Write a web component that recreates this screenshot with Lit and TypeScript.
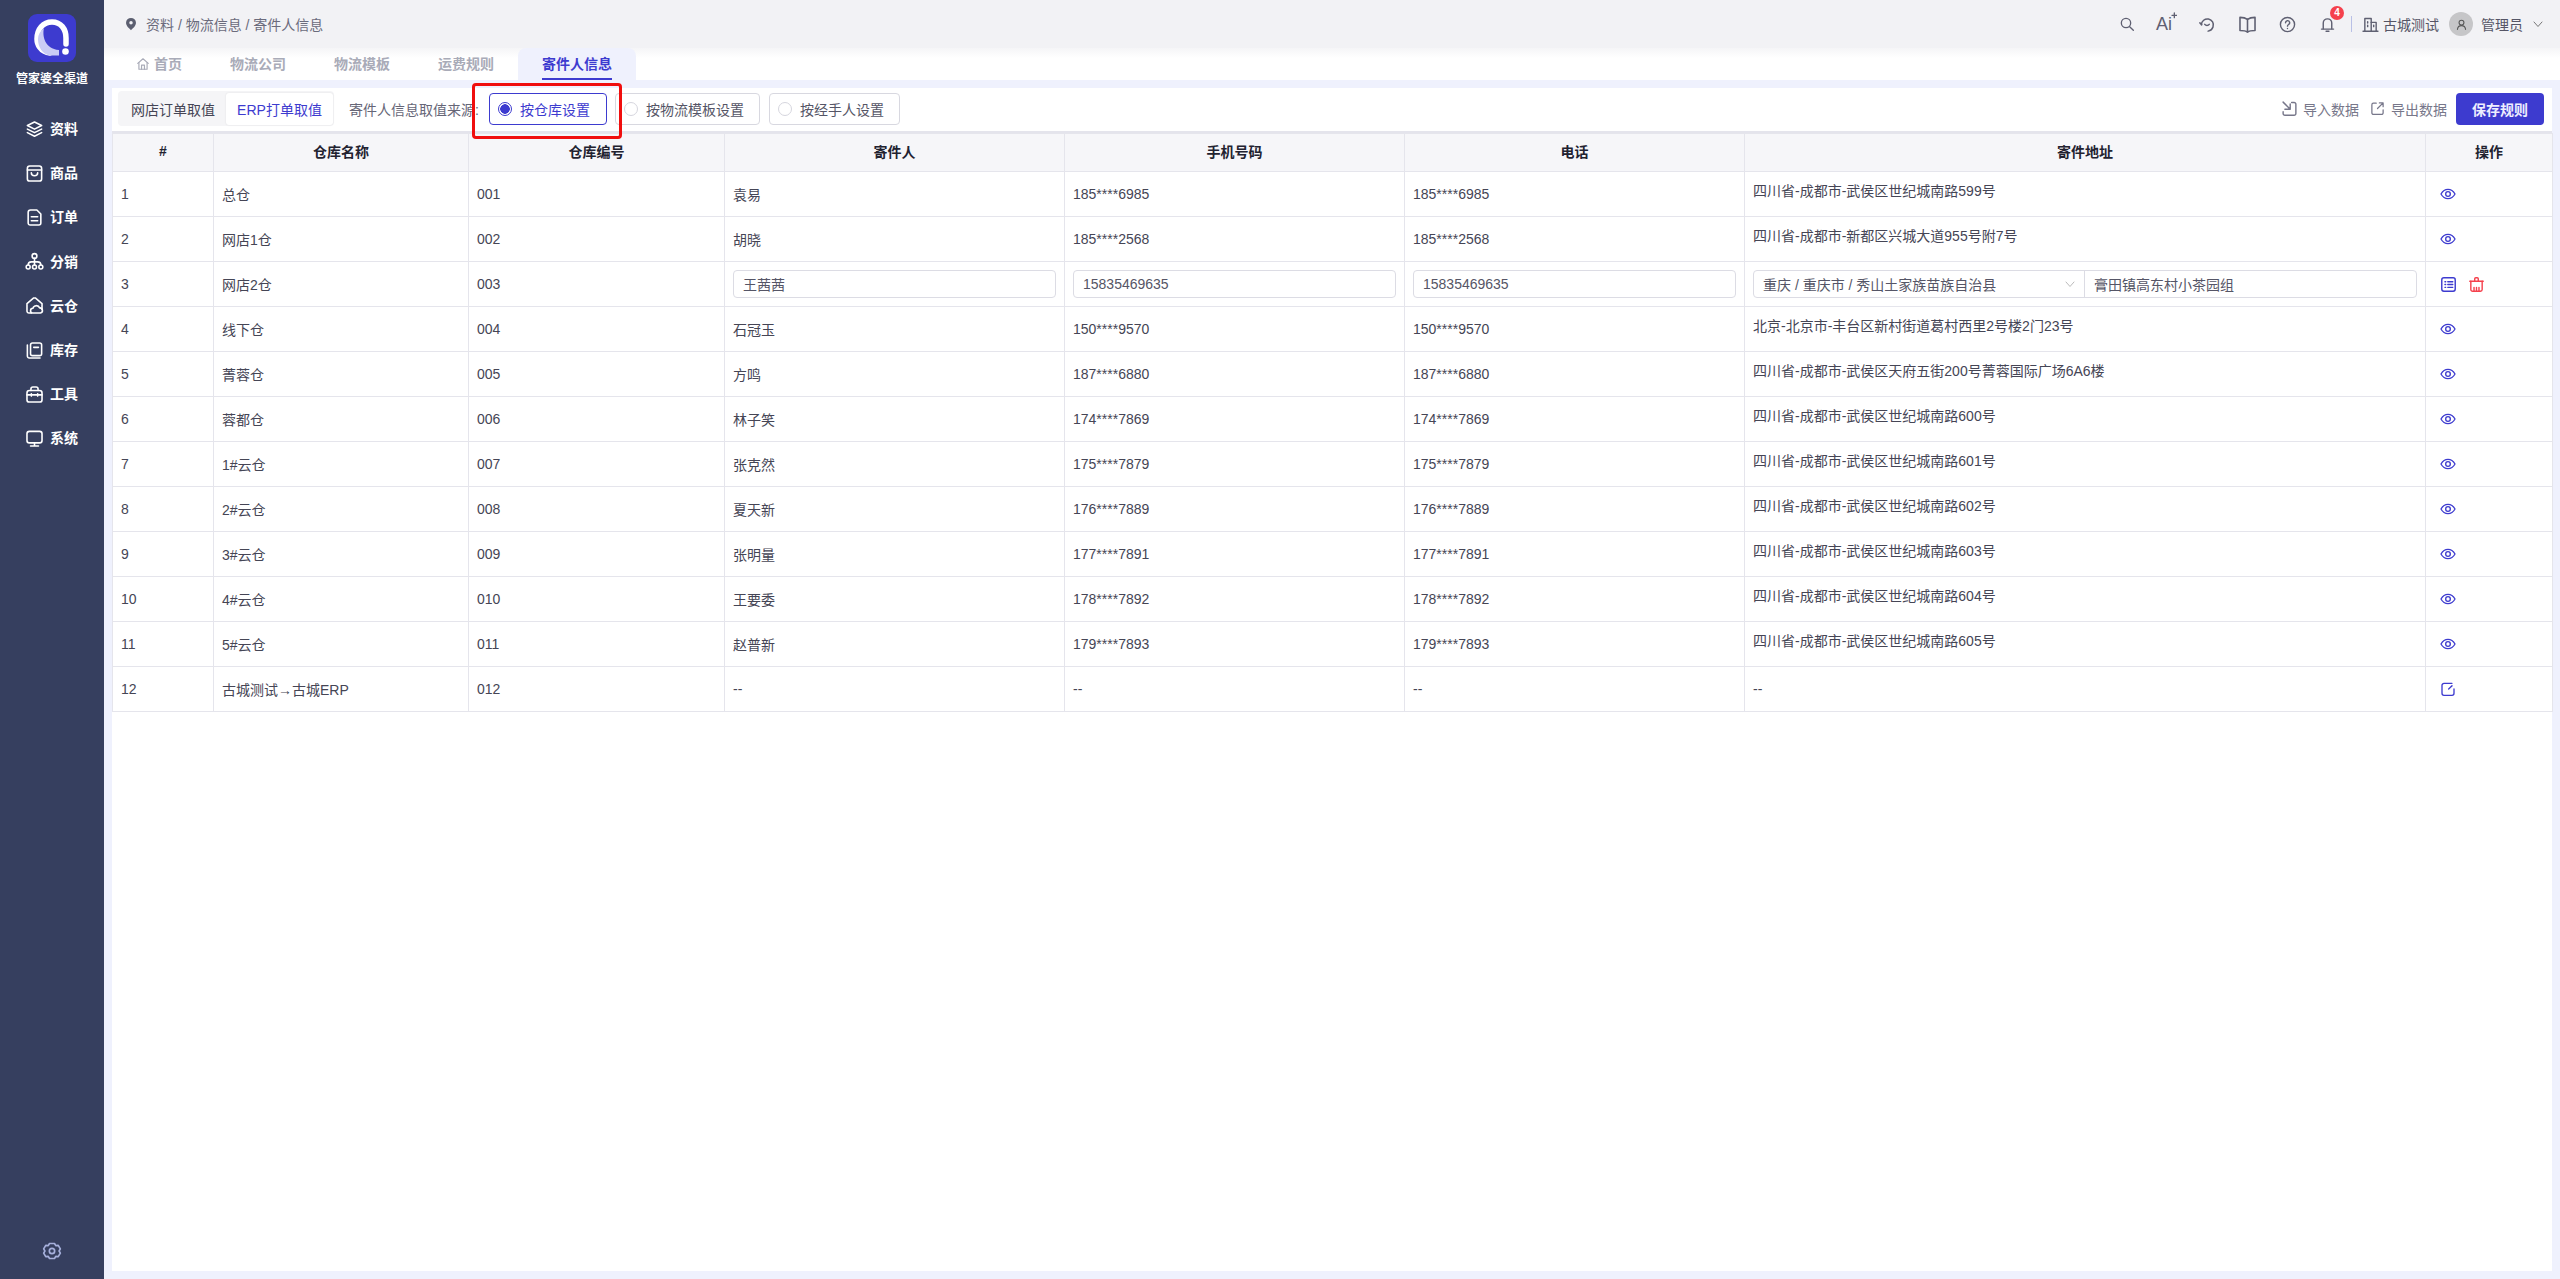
import { LitElement, html, css, svg } from "lit";
import { customElement } from "lit/decorators.js";

const ic = (size: number, body: unknown, cls = "") =>
  html`<svg class=${cls} width=${size} height=${size} viewBox="0 0 24 24" fill="none" stroke="currentColor" stroke-width="2" stroke-linecap="round" stroke-linejoin="round">${body}</svg>`;

const icons: Record<string, unknown> = {
  stack: svg`<path d="M12 2.500l9 4.500-9 4.500L3 7z"/><path d="M3 11.500l9 4.500 9-4.500"/><path d="M3 16l9 4.500 9-4.500"/>`,
  bag: svg`<rect x="3" y="2.500" width="18" height="19" rx="3"/><path d="M3 7.500h18"/><path d="M8 11c0 5 8 5 8 0"/>`,
  doc: svg`<path d="M7 2.500h8l5 5V19a2.500 2.500 0 0 1-2.500 2.500h-11A2.500 2.500 0 0 1 4 19V5.500A3 3 0 0 1 7 2.500z"/><path d="M8 11h8M8 16h8"/>`,
  org: svg`<circle cx="12" cy="5" r="3"/><circle cx="4" cy="19" r="2.500"/><circle cx="12" cy="19" r="2.500"/><circle cx="20" cy="19" r="2.500"/><path d="M12 8v8.500M4 16.500c0-3 1-4 4-4h8c3 0 4 1 4 4"/>`,
  cloudhome: svg`<path d="M8 21.500H5a2.500 2.500 0 0 1-2.500-2.500V9.500L11 2.500h2l8.500 7V17"/><path d="M10 21.500a3 3 0 0 1 0-6 4.500 4.500 0 0 1 8.500-.5 3.300 3.300 0 0 1 1 6.500z"/>`,
  box: svg`<path d="M3 5v14a2.500 2.500 0 0 0 2.500 2.500H19"/><rect x="7" y="2.500" width="14" height="16" rx="2.500"/><path d="M11 8h6"/>`,
  tool: svg`<rect x="2.500" y="7" width="19" height="14.500" rx="3"/><path d="M7.500 7V5a2.500 2.500 0 0 1 2.500-2.500h4A2.500 2.500 0 0 1 16.500 5v2"/><path d="M2.500 12.500h19M8 11v3M16 11v3"/>`,
  monitor: svg`<rect x="2.500" y="3" width="19" height="14.500" rx="3"/><path d="M12 17.500v4M7 21.500h10"/>`,
  gear: svg`<path d="M9 3h6l1.500 2.500 3-.2 2.500 4.200-1.500 2.500 1.500 2.500-2.500 4.200-3-.2L15 21H9l-1.500-2.500-3 .2L2 14.500 3.500 12 2 9.500l2.500-4.200 3 .2z"/><circle cx="12" cy="12" r="3.200"/>`,
  pin: svg`<path fill="currentColor" stroke="none" fill-rule="evenodd" d="M12 1.500a8.500 8.500 0 0 0-8.500 8.500c0 5.500 6 10.500 8.500 12.500 2.500-2 8.500-7 8.500-12.500A8.500 8.500 0 0 0 12 1.500zm0 5.500a3 3 0 1 1 0 6 3 3 0 0 1 0-6z"/>`,
  home: svg`<path d="M3 11l9-8 9 8"/><path d="M5 9.500V21h14V9.500"/><path d="M9.500 21v-7h5v7"/>`,
  search: svg`<circle cx="10.500" cy="10.500" r="7"/><path d="M16 16l5.500 5.500"/>`,
  sparkle: svg`<path d="M16 3v14M9 10h14" stroke-width="4"/>`,
  headset: svg`<path d="M4.500 13a8 8 0 1 1 15.500 3c-1 3-3.200 5-6.500 5.500"/><path d="M2.500 10.500l2.500 2.500"/><path d="M9 12.500c1.500 2 4.500 2 6 0"/>`,
  book: svg`<path d="M12 5.500C10 4 7 3 2.500 3v16.500c4.500 0 7.500.5 9.500 2 2-1.500 5-2 9.500-2V3C17 3 14 4 12 5.500z"/><path d="M12 5.500v16"/>`,
  help: svg`<circle cx="12" cy="12" r="10"/><path d="M9.200 9.500a2.900 2.900 0 1 1 4.300 2.500c-1 .6-1.500 1.200-1.500 2.300"/><path d="M12 17.500v.1"/>`,
  bell: svg`<path d="M6 18V10a6 6 0 0 1 12 0v8"/><path d="M3.500 18.500h17"/><path d="M10 21.500h4"/>`,
  building: svg`<path d="M4 21V3.500h9V21"/><path d="M13 9h7v12"/><path d="M1.500 21.500h21"/><path d="M8 8v2M8 13v2M16.500 13v2"/>`,
  user: svg`<circle cx="12" cy="8.500" r="4.500"/><path d="M4.500 21c.5-4.500 3.500-7 7.500-7s7 2.500 7.500 7"/>`,
  chev: svg`<path d="M4 8l8 9 8-9"/>`,
  imp: svg`<path d="M3 3l10 10M13 5.500V13H5.500"/><path d="M15 3.500h3.500A2.500 2.500 0 0 1 21 6v13a2.500 2.500 0 0 1-2.500 2.500h-13A2.500 2.500 0 0 1 3 19v-2.500"/>`,
  exp: svg`<path d="M10 3.500H5.500A2.500 2.500 0 0 0 3 6v13a2.500 2.500 0 0 0 2.500 2.500h13A2.500 2.500 0 0 0 21 19v-5"/><path d="M12 12l9-9M15 3h6v6"/>`,
  eye: svg`<path d="M1.500 12C4 7.500 7.500 5 12 5s8 2.500 10.500 7c-2.500 4.500-6 7-10.500 7S4 16.500 1.500 12z"/><circle cx="12" cy="12" r="3.500"/>`,
  list: svg`<rect x="2.500" y="2.500" width="19" height="19" rx="3"/><path d="M7 8h1M11 8h7M7 12h1M11 12h7M7 16h1M11 16h7"/>`,
  trash: svg`<path d="M2.500 7.500h19"/><path d="M4 7.500V19a2.500 2.500 0 0 0 2.500 2.500h11A2.500 2.500 0 0 0 20 19V7.500"/><path d="M9.500 7.500V4a1.500 1.500 0 0 1 1.500-1.500h2A1.500 1.500 0 0 1 14.500 4v3.500"/><path d="M8.500 21v-5M12 21v-5M15.500 21v-5"/>`,
  edit: svg`<path d="M21 12v6.500a3 3 0 0 1-3 3H6a3 3 0 0 1-3-3v-12a3 3 0 0 1 3-3h12"/><path d="M18 7l-5 5"/>`,
};

const nav: [string, string][] = [
  ["stack", "资料"], ["bag", "商品"], ["doc", "订单"], ["org", "分销"],
  ["cloudhome", "云仓"], ["box", "库存"], ["tool", "工具"], ["monitor", "系统"],
];

type Row = { n: string; code: string; p: string; m: string; a: string; edit?: boolean; last?: boolean };
const rows: Row[] = [
  { n: "总仓", code: "001", p: "袁易", m: "185****6985", a: "四川省-成都市-武侯区世纪城南路599号" },
  { n: "网店1仓", code: "002", p: "胡晓", m: "185****2568", a: "四川省-成都市-新都区兴城大道955号附7号" },
  { n: "网店2仓", code: "003", p: "王茜茜", m: "15835469635", a: "", edit: true },
  { n: "线下仓", code: "004", p: "石冠玉", m: "150****9570", a: "北京-北京市-丰台区新村街道葛村西里2号楼2门23号" },
  { n: "菁蓉仓", code: "005", p: "方鸣", m: "187****6880", a: "四川省-成都市-武侯区天府五街200号菁蓉国际广场6A6楼" },
  { n: "蓉都仓", code: "006", p: "林子笑", m: "174****7869", a: "四川省-成都市-武侯区世纪城南路600号" },
  { n: "1#云仓", code: "007", p: "张克然", m: "175****7879", a: "四川省-成都市-武侯区世纪城南路601号" },
  { n: "2#云仓", code: "008", p: "夏天新", m: "176****7889", a: "四川省-成都市-武侯区世纪城南路602号" },
  { n: "3#云仓", code: "009", p: "张明量", m: "177****7891", a: "四川省-成都市-武侯区世纪城南路603号" },
  { n: "4#云仓", code: "010", p: "王要委", m: "178****7892", a: "四川省-成都市-武侯区世纪城南路604号" },
  { n: "5#云仓", code: "011", p: "赵普新", m: "179****7893", a: "四川省-成都市-武侯区世纪城南路605号" },
  { n: "古城测试→古城ERP", code: "012", p: "--", m: "--", a: "--", last: true },
];

@customElement("app-root")
export class AppRoot extends LitElement {
  static styles = css`
    :host { display: flex; width: 100%; height: 1279px; overflow: hidden; font-family: "Liberation Sans", "Noto Sans CJK SC", sans-serif; font-size: 14px; color: #454555; background: #eff1fd; }
    * { box-sizing: border-box; }
    svg { display: block; flex: none; }
    .side { width: 104px; flex: none; background: #363f5f; color: #fff; display: flex; flex-direction: column; align-items: center; padding: 14px 0 18px; }
    .logo { width: 48px; height: 48px; border-radius: 9px; background: #3d3bcf; }
    .brand { font-size: 12px; line-height: 16px; font-weight: 700; margin-top: 9px; white-space: nowrap; }
    .nav { display: flex; flex-direction: column; margin-top: 20px; flex: 1; }
    .nav-item { height: 44.2px; display: flex; align-items: center; gap: 6px; font-weight: 700; line-height: 20px; margin-left: -1px; }
    .gear { color: #a6b0dc; }
    .main { flex: 1; min-width: 0; display: flex; flex-direction: column; }
    .top { height: 48px; flex: none; background: #f2f2f5; display: flex; align-items: center; padding: 0 16px 0 20px; color: #6b6b7c; }
    .crumb { margin-left: 8px; flex: 1; }
    .pin { color: #5c5f70; }
    .tools { display: flex; align-items: center; color: #5f6072; }
    .tool { width: 40px; display: flex; justify-content: center; position: relative; }
    .ai { font-size: 18px; line-height: 20px; position: relative; padding-right: 4px; margin-left: -2px; }
    .ai svg { position: absolute; right: -1px; top: -2px; }
    .badge { position: absolute; left: 23px; top: -10px; width: 14px; height: 14px; border-radius: 50%; background: #f5414d; color: #fff; font-size: 10px; font-weight: 700; line-height: 14px; text-align: center; }
    .sep { width: 1px; height: 16px; background: #b9c0e6; margin: 0 10px 0 4px; }
    .org { margin-left: 4px; white-space: nowrap; color: #555566; }
    .org.admin { margin-left: 0; }
    .avatar { width: 24px; height: 24px; border-radius: 50%; background: #c6c6c8; color: #555; display: flex; align-items: center; justify-content: center; margin: 0 8px 0 10px; }
    .chev { margin-left: 9px; color: #777; }
    .tabs { height: 32px; flex: none; background: linear-gradient(#f5f5f7, #fff 10px); display: flex; padding-left: 8px; }
    .tab { position: relative; padding: 0 24px; height: 32px; line-height: 32px; font-weight: 700; color: #a9abb8; display: flex; align-items: center; gap: 4px; }
    .tab.on { background: #eff1fd; border-radius: 8px 8px 0 0; color: #3d3bcf; }
    .tab.on::after { content: ""; position: absolute; left: 24px; right: 24px; bottom: 0; height: 2px; background: #3d3bcf; }
    .body { flex: 1; padding: 8px; min-height: 0; }
    .panel { background: #fff; height: 100%; position: relative; }
    .bar { height: 45px; display: flex; align-items: center; padding: 0 8px 0 6px; border-bottom: 2px solid #e4e4ec; }
    .seg { display: flex; align-items: center; height: 35px; width: 216px; background: #f5f5f7; border-radius: 4px; padding: 0 1px 0 13px; margin-top: -2px; justify-content: space-between; }
    .seg b { font-weight: 400; background: #fff; color: #3d3bcf; height: 32px; width: 107px; display: flex; align-items: center; justify-content: center; border-radius: 3px; box-shadow: 0 0 2px rgba(0,0,0,.1); }
    .label { margin-left: 15px; margin-right: 9px; width: 131px; white-space: nowrap; overflow: hidden; color: #666677; margin-top: -2px; }
    .radio { height: 32px; margin-top: -2px; margin-right: 9px; border: 1px solid #d8d8e0; border-radius: 4px; display: flex; align-items: center; gap: 8px; padding: 0 15px 0 8px; color: #555566; white-space: nowrap; }
    .radio i { width: 14px; height: 14px; border: 1px solid #d6d6de; border-radius: 50%; flex: none; }
    .radio.on { border-color: #3d3bcf; color: #3d3bcf; padding-right: 16px; margin-right: 8px; }
    .radio.on i { border: 1px solid #3d3bcf; background: radial-gradient(circle, #3d3bcf 0 4.500px, #fff 5px); }
    .spacer { flex: 1; }
    .act { display: flex; align-items: center; gap: 5px; color: #77778a; margin-right: 11px; margin-top: -2px; white-space: nowrap; }
    .act.last { margin-right: 9px; gap: 6px; }
    .save { width: 88px; height: 32px; margin-top: -2px; background: #3d3bcf; color: #eef; border-radius: 4px; display: flex; align-items: center; justify-content: center; font-weight: 700; }
    .mark { position: absolute; left: 360px; top: -5px; width: 150px; height: 56px; border: 3px solid #f00e0e; border-radius: 4px; pointer-events: none; }
    table { border-collapse: collapse; table-layout: fixed; width: 2440px; }
    th, td { border: 1px solid #e5e5ec; padding: 0 8px; text-align: left; white-space: nowrap; overflow: hidden; }
    th { height: 38px; padding-bottom: 3px; background: #f6f6f9; color: #222230; text-align: center; font-weight: 700; }
    td { height: 45px; }
    .addr { padding-bottom: 8px; }
    .in { height: 28px; border: 1px solid #dcdce4; border-radius: 4px; display: flex; align-items: center; padding: 0 9px; color: #555566; background: #fff; }
    .addr-in { padding: 0; }
    .addr-in span { padding: 0 9px; display: flex; align-items: center; height: 100%; }
    .addr-in .l { width: 331px; border-right: 1px solid #dcdce4; justify-content: space-between; padding-right: 8px; flex: none; }
    .ops { display: flex; align-items: center; gap: 11px; padding-left: 6px; color: #3d3bcf; }
    .del { color: #f5414d; }
    .chev2 { color: #bbb; }
  `;

  render() {
    return html`
      <aside class="side">
        <div class="logo">
          <svg width="48" height="48" viewBox="0 0 48 48">
            <path d="M22 39 C12 38 9 30 9 25 C9 15 15 8 24 8 C33 8 38 15 38 24 V30" fill="none" stroke="#fff" stroke-width="5.500" stroke-linecap="round"/>
            <path d="M31 41.500 H22 C14 40 10 33 10 25 C10 21 12 17 16 14 C14 22 17 35 31 36 Z" fill="#c9cbf5"/>
            <circle cx="37.500" cy="37.500" r="3.300" fill="#fff"/>
          </svg>
        </div>
        <div class="brand">管家婆全渠道</div>
        <nav class="nav">
          ${nav.map(([i, t]) => html`<div class="nav-item">${ic(19, icons[i])}<span>${t}</span></div>`)}
        </nav>
        ${ic(20, icons.gear, "gear")}
      </aside>
      <div class="main">
        <header class="top">
          ${ic(14, icons.pin, "pin")}
          <span class="crumb">资料 / 物流信息 / 寄件人信息</span>
          <div class="tools">
            <span class="tool">${ic(16, icons.search)}</span>
            <span class="tool"><span class="ai">Ai${ic(8, icons.sparkle)}</span></span>
            <span class="tool">${ic(18, icons.headset)}</span>
            <span class="tool">${ic(19, icons.book)}</span>
            <span class="tool">${ic(17, icons.help)}</span>
            <span class="tool">${ic(17, icons.bell)}<span class="badge">4</span></span>
            <span class="sep"></span>
            ${ic(17, icons.building)}
            <span class="org">古城测试</span>
            <span class="avatar">${ic(13, icons.user)}</span>
            <span class="org admin">管理员</span>
            ${ic(12, icons.chev, "chev")}
          </div>
        </header>
        <div class="tabs">
          <div class="tab">${ic(14, icons.home)}<span>首页</span></div>
          <div class="tab">物流公司</div>
          <div class="tab">物流模板</div>
          <div class="tab">运费规则</div>
          <div class="tab on">寄件人信息</div>
        </div>
        <div class="body">
          <section class="panel">
            <div class="bar">
              <div class="seg"><span>网店订单取值</span><b>ERP打单取值</b></div>
              <span class="label">寄件人信息取值来源:</span>
              <div class="radio on"><i></i>按仓库设置</div>
              <div class="radio"><i></i>按物流模板设置</div>
              <div class="radio"><i></i>按经手人设置</div>
              <span class="spacer"></span>
              <span class="act">${ic(17, icons.imp)}导入数据</span>
              <span class="act last">${ic(15, icons.exp)}导出数据</span>
              <div class="save">保存规则</div>
            </div>
            <div class="mark"></div>
            <table>
              <colgroup>
                ${[101, 255, 256, 340, 340, 340, 681, 127].map((w) => html`<col style="width:${w}px" />`)}
              </colgroup>
              <thead>
                <tr>${["#", "仓库名称", "仓库编号", "寄件人", "手机号码", "电话", "寄件地址", "操作"].map((h) => html`<th>${h}</th>`)}</tr>
              </thead>
              <tbody>
                ${rows.map((r, i) => html`
                  <tr>
                    <td>${i + 1}</td>
                    <td>${r.n}</td>
                    <td>${r.code}</td>
                    ${r.edit
                      ? html`
                        <td><div class="in">${r.p}</div></td>
                        <td><div class="in">${r.m}</div></td>
                        <td><div class="in">${r.m}</div></td>
                        <td><div class="in addr-in"><span class="l">重庆 / 重庆市 / 秀山土家族苗族自治县${ic(12, icons.chev, "chev2")}</span><span>膏田镇高东村小茶园组</span></div></td>
                        <td><div class="ops">${ic(17, icons.list)}<span class="del">${ic(17, icons.trash)}</span></div></td>`
                      : html`
                        <td>${r.p}</td>
                        <td>${r.m}</td>
                        <td>${r.m}</td>
                        <td class=${r.last ? "" : "addr"}>${r.a}</td>
                        <td><div class="ops">${ic(16, r.last ? icons.edit : icons.eye)}</div></td>`}
                  </tr>`)}
              </tbody>
            </table>
          </section>
        </div>
      </div>
    `;
  }
}
